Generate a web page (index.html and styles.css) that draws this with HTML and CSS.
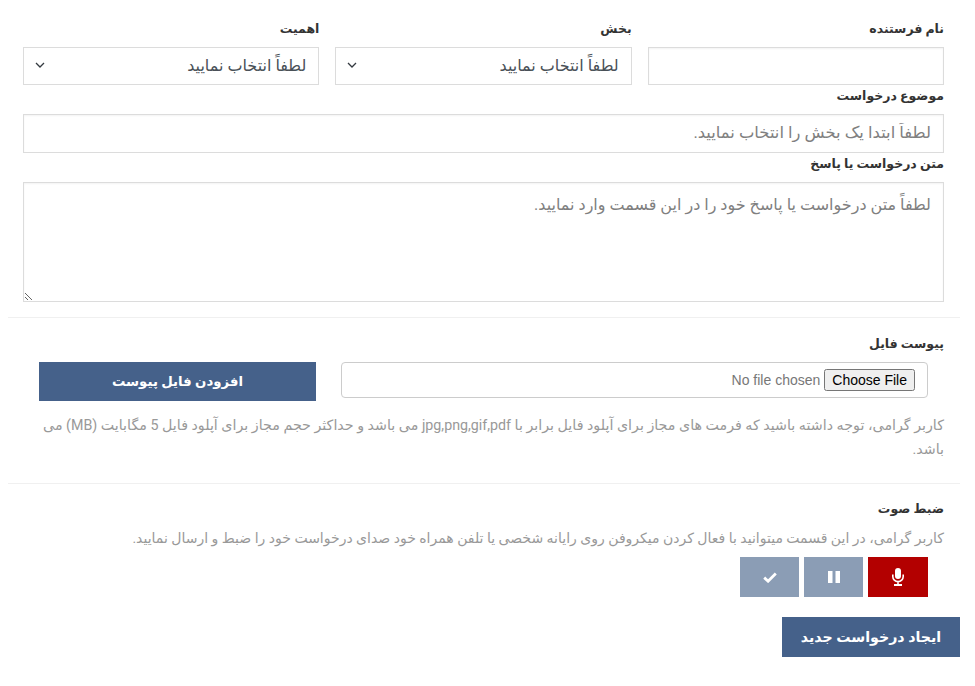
FILE: index.html
```html
<!DOCTYPE html>
<html lang="fa">
<head>
<meta charset="utf-8">
<title>ایجاد درخواست</title>
<link rel="stylesheet" href="styles.css">
</head>
<body>
<form class="form" dir="rtl">
  <div class="top-row">
    <div class="field"><label class="label">نام فرستنده</label><input class="control" type="text"></div>
    <div class="field"><label class="label">بخش</label>
      <div class="control select"><span>لطفاً انتخاب نمایید</span>
        <svg class="chev" viewBox="0 0 10 6" width="10" height="6"><path d="M1 1l4 4 4-4" fill="none" stroke="#343a40" stroke-width="1.3"/></svg></div></div>
    <div class="field"><label class="label">اهمیت</label>
      <div class="control select"><span>لطفاً انتخاب نمایید</span>
        <svg class="chev" viewBox="0 0 10 6" width="10" height="6"><path d="M1 1l4 4 4-4" fill="none" stroke="#343a40" stroke-width="1.3"/></svg></div></div>
  </div>
  <div class="full"><label class="label">موضوع درخواست</label>
    <input class="control tall" type="text" placeholder="لطفاً ابتدا یک بخش را انتخاب نمایید."></div>
  <div class="full"><label class="label">متن درخواست یا پاسخ</label>
    <textarea class="control area" placeholder="لطفاً متن درخواست یا پاسخ خود را در این قسمت وارد نمایید."></textarea></div>
  <hr class="rule first">
  <div class="full"><label class="label">پیوست فایل</label></div>
  <div class="file-row">
    <div class="file-box"><input type="file" class="file"></div>
    <button type="button" class="btn attach">افزودن فایل پیوست</button>
  </div>
  <p class="note wrapped">کاربر گرامی، توجه داشته باشید که فرمت های مجاز برای آپلود فایل برابر با jpg,png,gif,pdf می باشد و حداکثر حجم مجاز برای آپلود فایل 5 مگابایت (MB) می باشد.</p>
  <hr class="rule second">
  <div class="full"><label class="label">ضبط صوت</label></div>
  <p class="note voice">کاربر گرامی، در این قسمت میتوانید با فعال کردن میکروفن روی رایانه شخصی یا تلفن همراه خود صدای درخواست خود را ضبط و ارسال نمایید.</p>
  <div class="rec">
    <button type="button" class="rec-btn red"><svg viewBox="0 0 12 18" width="12" height="18"><rect x="3" y="0" width="6" height="11" rx="3" fill="#fff"/><path fill="none" stroke="#fff" stroke-width="1.6" d="M0.8 6.5V8.4a5.2 5.2 0 0 0 10.4 0V6.5M6 13.6V16.4"/><path fill="#fff" d="M2 16h8v2H2z"/></svg></button>
    <button type="button" class="rec-btn mute"><svg viewBox="0 0 12 12" width="12" height="12"><path fill="#fff" d="M0 0h4.5v12H0zM7.5 0H12v12H7.5z"/></svg></button>
    <button type="button" class="rec-btn mute"><svg viewBox="0 0 14 11" width="14" height="11"><path fill="none" stroke="#fff" stroke-width="2.8" d="M1.2 5.6l3.9 3.6L12.8 1.6"/></svg></button>
  </div>
  <div class="submit-row"><button type="button" class="btn submit">ایجاد درخواست جدید</button></div>
</form>
</body>
</html>
```
FILE: styles.css
```css
* { box-sizing: border-box; }
html, body { margin: 0; background: #fff; }
body { width: 960px; font-family: Roboto, "DejaVu Sans", sans-serif; color: #333; font-size: 13px; }
.form { display: flex; flex-direction: column; padding-top: 20px; }
.top-row { display: flex; gap: 16px; padding: 0 16px 0 23px; }
.field { flex: 1 1 0; display: flex; flex-direction: column; min-width: 0; }
.full { padding: 2px 16px 0 23px; display: flex; flex-direction: column; }
.label { font-size: 12.5px; font-weight: 700; line-height: 18px; height: 18px; color: #333; margin-bottom: 9px; }
.control { width: 100%; height: 38px; border: 1px solid #dcdcdc; background: #fff; padding: 0 12px; font: 16px Roboto, "DejaVu Sans", sans-serif; color: #495057; outline: 0; border-radius: 0; box-shadow: inset 0 1px 2px rgba(0,0,0,.05); }
.control::placeholder { color: #808080; opacity: 1; }
.select { display: flex; align-items: center; justify-content: space-between; padding-left: 11px; padding-bottom: 2px; box-shadow: none; }
.tall { height: 39px; padding-bottom: 2px; font-size: 16.4px; }
.area { height: 120px; padding-top: 12px; display: block; resize: vertical; }
.rule { border: 0; border-top: 1px solid #f0f0f0; margin: 15px 0 15px 8px; width: 952px; }
.file-row { display: flex; justify-content: space-between; padding: 0 32px 0 39px; align-items: flex-start; }
.file-box { width: 587px; height: 36px; border: 1px solid #ccc; border-radius: 4px; padding: 0 12px; display: flex; align-items: center; }
.file { font: 14px "Liberation Sans", Arial, sans-serif; color: #777; width: 100%; }
.btn { border: 0; background: #45618a; color: #fff; font: 700 13.3px Roboto, "DejaVu Sans", sans-serif; padding: 0; }
.attach { width: 277px; height: 39px; }
.note { margin: 12px 16px 0 23px; color: #999; font-size: 14px; line-height: 24px; }
.wrapped { margin-left: 40px; font-size: 14.25px; }
.second { margin-top: 22px; margin-bottom: 14px; }
.voice { margin-top: -1px; }
.rec { display: flex; gap: 5px; padding: 0 32px; margin-top: 7px; }
.rec-btn { width: 59px; height: 40px; border: 0; padding: 0; display: flex; align-items: center; justify-content: center; }
.red { background: #b30000; width: 60px; }
.mute { background: #8b9db5; }
.submit-row { display: flex; justify-content: flex-start; margin-top: 20px; }
.submit { width: 178px; height: 40px; font-size: 14.2px; }
```
